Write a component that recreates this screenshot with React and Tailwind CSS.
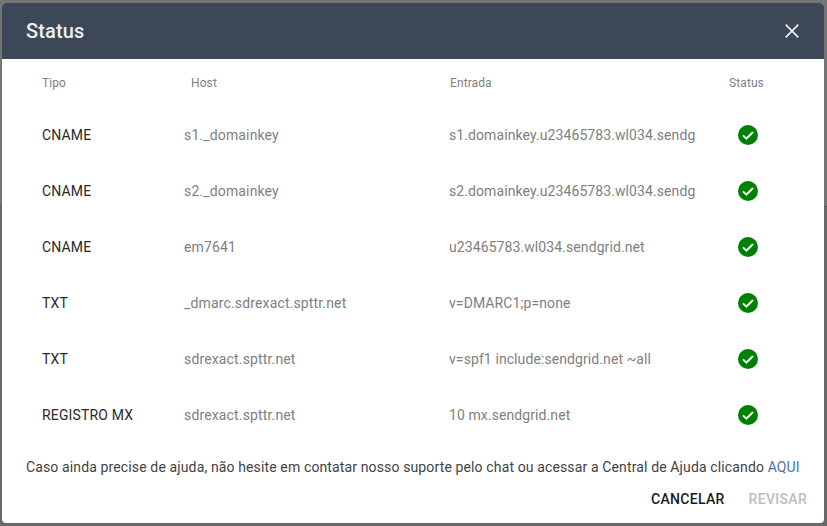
import React from 'react'

const rows = [
  { tipo: 'CNAME', host: 's1._domainkey', entrada: 's1.domainkey.u23465783.wl034.sendgrid.net' },
  { tipo: 'CNAME', host: 's2._domainkey', entrada: 's2.domainkey.u23465783.wl034.sendgrid.net' },
  { tipo: 'CNAME', host: 'em7641', entrada: 'u23465783.wl034.sendgrid.net' },
  { tipo: 'TXT', host: '_dmarc.sdrexact.spttr.net', entrada: 'v=DMARC1;p=none' },
  { tipo: 'TXT', host: 'sdrexact.spttr.net', entrada: 'v=spf1 include:sendgrid.net ~all' },
  { tipo: 'REGISTRO MX', host: 'sdrexact.spttr.net', entrada: '10 mx.sendgrid.net' },
]

const CheckCircle = () => (
  <svg viewBox="0 0 20 20" className="w-5 h-5">
    <circle cx="10" cy="10" r="10" fill="#008000" />
    <path d="M5 10.4l3.4 3.3L15 7" fill="none" stroke="#fff" strokeWidth="2" />
  </svg>
)

const App = () => {
  return (
    <div className="w-[827px] h-[526px] bg-[linear-gradient(#757575_206px,#5c5c5c_206px,#5c5c5c_207px,#696969_207px)] pt-[3px] pl-[2px] font-['Roboto',sans-serif] overflow-hidden">
      <div className="w-[822px] h-[520px] bg-white rounded overflow-hidden flex flex-col">

        {/* Header */}
        <div className="h-[56px] shrink-0 bg-[#3c4858] flex items-center justify-between pl-6 pr-[25px]">
          <h1 className="text-xl font-medium tracking-[0.15px] text-[#eceef0]">Status</h1>
          <svg viewBox="0 0 14 14" className="w-[14px] h-[14px]">
            <path d="M0.7 0.7l12.6 12.6M13.3 0.7L0.7 13.3" stroke="#eceef0" strokeWidth="1.7" fill="none" />
          </svg>
        </div>

        {/* Table */}
        <div className="h-[48px] shrink-0 grid grid-cols-[149px_259px_279px_1fr] items-center pl-10 text-xs tracking-[0.1px] text-[#808080]">
          <span>Tipo</span>
          <span>Host</span>
          <span>Entrada</span>
          <span>Status</span>
        </div>
        <div>
          {rows.map((row, i) => (
            <div key={i} className="h-[56px] grid grid-cols-[142px_265px_247px_1fr] items-center pl-10 text-sm tracking-[0.15px]">
              <span className="text-[#2a2a2a]">{row.tipo}</span>
              <span className="text-[#808080]">{row.host}</span>
              <span className="text-[#808080] tracking-[0.09px] overflow-hidden whitespace-nowrap">{row.entrada}</span>
              <span className="pl-[42px]"><CheckCircle /></span>
            </div>
          ))}
        </div>

        {/* Footer */}
        <p className="mt-[14px] pl-6 text-sm tracking-[0.13px] text-[#424242] whitespace-nowrap">
          Caso ainda precise de ajuda, não hesite em contatar nosso suporte pelo chat ou acessar a Central de Ajuda clicando <span className="text-[#4a76a8]">AQUI</span>
        </p>
        <div className="flex justify-end gap-6 pr-[17px] mt-[12px] text-sm font-medium tracking-[0.3px]">
          <button className="text-[#1a1a1a]">CANCELAR</button>
          <button className="text-[#bdbdbd]">REVISAR</button>
        </div>
      </div>
    </div>
  )
}

export default App
